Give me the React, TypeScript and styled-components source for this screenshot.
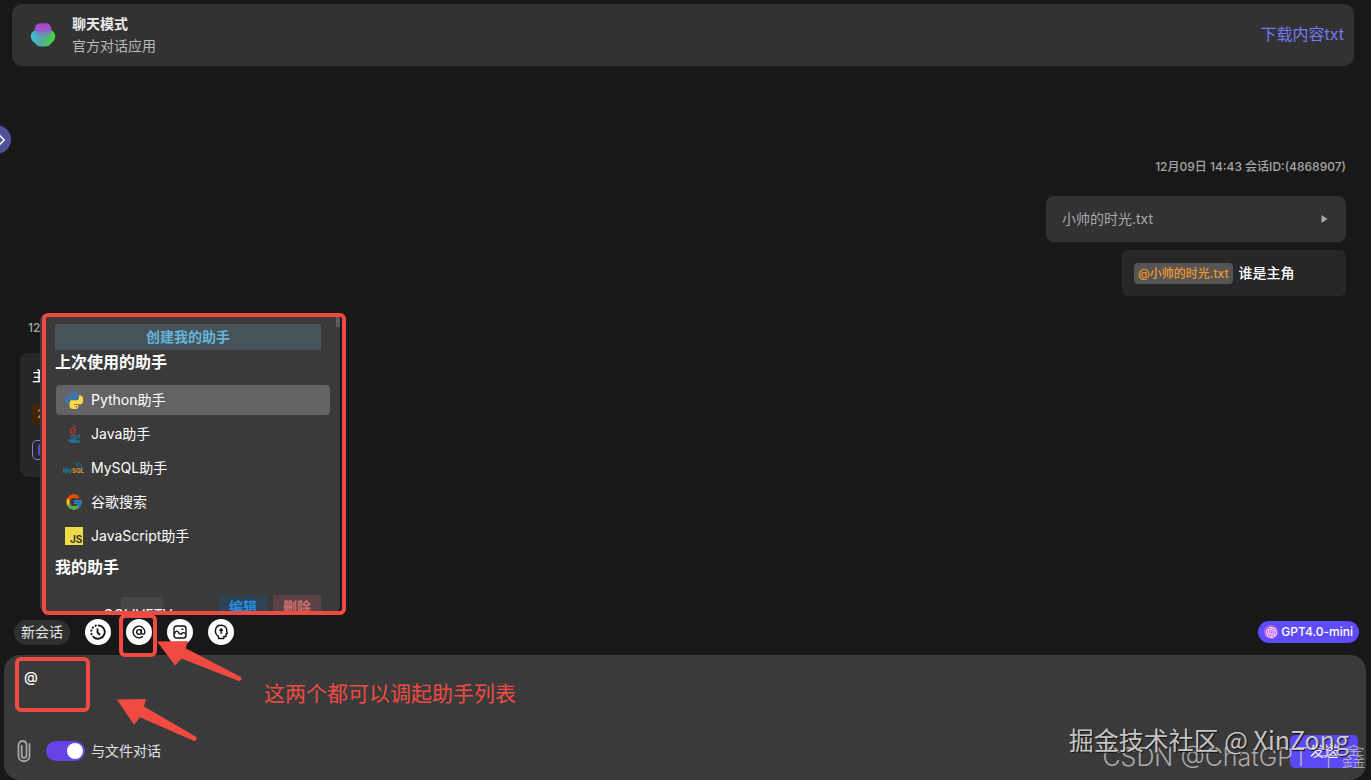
import React from 'react';
import styled, { createGlobalStyle, css } from 'styled-components';
import { FcGoogle } from 'react-icons/fc';
import { SiOpenai } from 'react-icons/si';
import { AtSign, ChevronRight } from 'lucide-react';

const RED = '#f04b42';

const GlobalStyle = createGlobalStyle`
  *, *::before, *::after { box-sizing: border-box; }
  html, body { margin: 0; padding: 0; background: #181818; }
  body, button, input, textarea {
    font-family: Inter, 'Noto Sans CJK SC', sans-serif;
    font-size: 14px;
    line-height: 20px;
  }
  button { border: 0; padding: 0; background: none; color: inherit; cursor: pointer; }
  h1, h2, p, ul { margin: 0; padding: 0; }
  ul { list-style: none; }
`;

const Page = styled.div`
  position: relative;
  display: flex;
  flex-direction: column;
  min-height: 100vh;
  padding-top: 4px;
  overflow: hidden;
  color: #fff;
`;

const Header = styled.header`
  display: flex;
  align-items: center;
  gap: 16px;
  height: 62px;
  margin: 0 17px 0 12px;
  padding: 0 10px 0 18px;
  border-radius: 10px;
  background: #323232;
`;

const HeaderText = styled.div`
  flex: 1;
`;

const Title = styled.h1`
  font-size: 14px;
  line-height: 22px;
  font-weight: 600;
  color: #ececec;
`;

const Subtitle = styled.p`
  line-height: 22px;
  color: #b8b8b8;
`;

const DownloadLink = styled.a`
  padding-bottom: 2px;
  font-size: 16px;
  line-height: 24px;
  color: #7478f2;
  text-decoration: none;
`;

const DrawerHandle = styled.button`
  position: absolute;
  left: -18px;
  top: 125px;
  display: flex;
  align-items: center;
  justify-content: flex-end;
  width: 29px;
  height: 29px;
  border-radius: 50%;
  background: #51519a;
`;

const Chat = styled.main`
  flex: 1;
  display: flex;
  flex-direction: column;
  gap: 22px;
  padding: 91px 25px 0 20px;
`;

const Message = styled.section<{ $mine?: boolean }>`
  display: flex;
  flex-direction: column;
  align-items: ${p => (p.$mine ? 'flex-end' : 'flex-start')};
`;

const Stamp = styled.time<{ $inset?: boolean }>`
  font-size: 12px;
  font-weight: 500;
  line-height: 20px;
  color: #a6a6a6;
  padding-left: ${p => (p.$inset ? 8 : 0)}px;
`;

const FileCard = styled.button`
  display: flex;
  align-items: center;
  justify-content: space-between;
  width: 300px;
  height: 46px;
  margin: 19px 0 8px;
  padding: 0 18px 0 16px;
  border-radius: 8px;
  background: #323232;
  color: #a9a9a9;
`;

const Bubble = styled.div`
  display: flex;
  align-items: center;
  gap: 6px;
  width: 224px;
  height: 46px;
  padding: 0 12px;
  border-radius: 6px;
  background: #272727;
  font-weight: 500;
`;

const FileTag = styled.span`
  padding: 0 4px;
  border-radius: 4px;
  background: #575553;
  color: #f0962e;
  font-size: 12px;
  line-height: 21px;
`;

const Reply = styled.div`
  display: flex;
  flex-direction: column;
  align-items: flex-start;
  gap: 16px;
  width: 300px;
  height: 124px;
  margin-top: 15px;
  padding: 13px 12px;
  border-radius: 8px;
  background: #272727;
  font-weight: 500;
`;

const CostTag = styled.span`
  margin-top: 2px;
  padding: 0 5px;
  background: #3f2509;
  color: #c88a3c;
  font-size: 12px;
  line-height: 20px;
`;

const OutlineTag = styled.span`
  display: flex;
  align-items: center;
  width: 28px;
  height: 20px;
  padding-left: 5px;
  border: 1px solid #8a78e8;
  border-radius: 5px;
  &::before {
    content: '';
    width: 16px;
    height: 12px;
    border-radius: 3px;
    background: #5e49d8;
  }
`;

const Dock = styled.footer`
  position: relative;
`;

const ToolBar = styled.nav`
  display: flex;
  align-items: center;
  gap: 15px;
  padding: 0 12px 10px 14px;
`;

const NewChat = styled.button`
  height: 25px;
  padding: 0 7px;
  border-radius: 13px;
  background: #303030;
  color: #e4e4e4;
`;

const RoundButton = styled.button`
  position: relative;
  display: flex;
  align-items: center;
  justify-content: center;
  width: 26px;
  height: 26px;
  border-radius: 50%;
  background: #fff;
  color: #111;
`;

const ModelBadge = styled.button`
  display: flex;
  align-items: center;
  gap: 3px;
  height: 22px;
  margin-left: auto;
  padding: 0 6px;
  border-radius: 11px;
  background: #5f4bf7;
  color: #fff;
  font-size: 12px;
  font-weight: 500;
`;

const ModelIcon = styled.span`
  display: flex;
  align-items: center;
  justify-content: center;
  width: 14px;
  height: 14px;
  border-radius: 50%;
  background: #c062e4;
`;

const Composer = styled.form`
  position: relative;
  display: flex;
  flex-direction: column;
  height: 125px;
  margin: 0 5px 0 4px;
  padding: 12px 8px 12px 12px;
  border-radius: 16px;
  background: #3a3a3b;
`;

const Prompt = styled.textarea`
  flex: 1;
  width: 100%;
  min-height: 0;
  padding: 0 8px;
  border: 0;
  outline: 0;
  resize: none;
  background: transparent;
  color: #fff;
  font-weight: 500;
`;

const ComposerRow = styled.div`
  display: flex;
  align-items: center;
  gap: 14px;
  height: 34px;
`;

const IconButton = styled.button`
  display: flex;
  color: #a5a5a5;
`;

const SwitchLabel = styled.label`
  display: flex;
  align-items: center;
  gap: 6px;
  color: #e2e2e2;
`;

const Switch = styled.input`
  appearance: none;
  display: flex;
  align-items: center;
  justify-content: flex-end;
  width: 39px;
  height: 20px;
  margin: 0;
  padding: 0 2px;
  border-radius: 10px;
  background: #6543e6;
  &::before {
    content: '';
    width: 16px;
    height: 16px;
    border-radius: 50%;
    background: #fff;
  }
`;

const SendButton = styled.button`
  width: 68px;
  height: 33px;
  margin-left: auto;
  border-radius: 5px;
  background: #5b49f6;
  color: #fff;
`;

const Picker = styled.aside`
  position: absolute;
  left: 40px;
  bottom: calc(100% + 7px);
  width: 300px;
  height: 298px;
  padding: 10px 10px 0 15px;
  overflow: hidden;
  border-radius: 6px;
  background: #3a3a3b;
`;

const PickerScroll = styled.span`
  position: absolute;
  right: 0;
  top: 0;
  width: 4px;
  height: 13px;
  background: #5a5a5b;
`;

const CreateButton = styled.button`
  display: block;
  width: 266px;
  height: 26px;
  border-radius: 2px;
  background: #475359;
  color: #65b5da;
  font-weight: 600;
`;

const GroupTitle = styled.h2`
  font-size: 16px;
  line-height: 24px;
  font-weight: 600;
`;

const AssistantList = styled.ul`
  display: flex;
  flex-direction: column;
  gap: 4px;
  margin: 11px 0 4px 1px;
`;

const Assistant = styled.li<{ $active?: boolean }>`
  border-radius: 4px;
  ${p => p.$active && css`background: #636365;`}
`;

const AssistantButton = styled.button`
  display: flex;
  align-items: center;
  gap: 8px;
  width: 100%;
  height: 30px;
  padding: 0 9px;
`;

const MineRow = styled.div`
  display: flex;
  align-items: flex-start;
  gap: 6px;
  margin-top: 16px;
  padding-right: 9px;
`;

const MineName = styled.span`
  flex: 1;
  padding: 10px 0 0 48px;
  background: linear-gradient(#464647, #464647) 66px 2px / 42px 14px no-repeat;
`;

const RowAction = styled.button<{ $danger?: boolean }>`
  width: 48px;
  height: 24px;
  border-radius: 2px;
  background: ${p => (p.$danger ? '#5a4244' : '#2e4356')};
  color: ${p => (p.$danger ? '#cf6f6f' : '#2590e6')};
  font-weight: 600;
`;

const Frame = styled.span<{ $l: number; $t: number; $w: number; $h: number }>`
  position: absolute;
  z-index: 2;
  left: ${p => p.$l}px;
  top: ${p => p.$t}px;
  width: ${p => p.$w}px;
  height: ${p => p.$h}px;
  border: 4px solid ${RED};
  border-radius: 6px;
  pointer-events: none;
`;

const Arrow = styled.svg<{ $l: number; $t: number }>`
  position: absolute;
  z-index: 3;
  left: ${p => p.$l}px;
  top: ${p => p.$t}px;
  pointer-events: none;
`;

const Note = styled.p`
  position: absolute;
  left: 260px;
  top: 25px;
  color: ${RED};
  font-size: 21px;
  line-height: 28px;
`;

const Watermark = styled.span<{ $front?: boolean }>`
  position: absolute;
  z-index: 4;
  right: ${p => (p.$front ? 22 : 5)}px;
  bottom: ${p => (p.$front ? 25 : 7)}px;
  color: ${p => (p.$front ? 'rgba(220,220,220,.9)' : 'rgba(190,190,190,.85)')};
  font-size: 25px;
  font-weight: ${p => (p.$front ? 400 : 300)};
  font-family: ${p => (p.$front ? "'Noto Sans CJK SC'" : "Inter, 'Noto Sans CJK SC'")}, sans-serif;
  line-height: 32px;
  white-space: nowrap;
  pointer-events: none;
  text-shadow: ${p => (p.$front ? '1px 1px 1px #111' : 'none')};
`;

const Logo = () => (
  <svg width="26" height="26" viewBox="0 0 26 26" aria-hidden="true">
    <defs>
      <linearGradient id="lgBase" x1="0" y1="0.3" x2="1" y2="0.5">
        <stop offset="0" stopColor="#37bfe0" />
        <stop offset="0.5" stopColor="#55a8a4" />
        <stop offset="1" stopColor="#3ee02e" />
      </linearGradient>
      <linearGradient id="lgTop" x1="0" y1="0" x2="0" y2="1">
        <stop offset="0" stopColor="#b53fd0" />
        <stop offset="0.45" stopColor="#9a58cc" />
        <stop offset="1" stopColor="#5d9aa8" stopOpacity="0" />
      </linearGradient>
    </defs>
    <path d="M5 8C2 10 .5 12 .8 14.500C1 18 3 20 5.500 21.500C7 24 9 24.500 13 24.500S19 24.300 21 21.500C23.500 20 25.300 17 25.300 13.500C25 11 23 9 21 8Z" fill="url(#lgBase)" />
    <path d="M5 9C4 5 6 1.500 10 1.200H16C20 1.500 22 5 21 9L19 17H7Z" fill="url(#lgTop)" />
  </svg>
);

const PythonIcon = () => (
  <svg width="18" height="18" viewBox="0 0 24 24" aria-hidden="true">
    <path fill="#3a76a8" d="M14.25.18l.9.2.73.26.59.3.45.32.34.34.25.34.16.33.1.3.04.26.02.2-.01.13V8.5l-.05.63-.13.55-.21.46-.26.38-.3.31-.33.25-.35.19-.35.14-.33.1-.3.07-.26.04-.21.02H8.770l-.69.05-.59.14-.5.22-.41.27-.33.32-.27.35-.2.36-.15.37-.1.35-.07.32-.04.27-.02.21v3.060H3.170l-.21-.03-.28-.07-.32-.12-.35-.18-.36-.26-.36-.36-.35-.46-.32-.59-.28-.73-.21-.88-.14-1.050-.05-1.230.06-1.220.16-1.040.24-.87.32-.71.36-.57.4-.44.42-.33.42-.24.4-.16.36-.1.32-.05.24-.01h.16l.06.01h8.160v-.83H6.180l-.01-2.750-.02-.37.05-.34.11-.31.17-.28.25-.26.31-.23.38-.2.44-.18.51-.15.58-.12.64-.1.71-.06.77-.04.84-.02 1.270.05zm-6.300 1.980l-.23.33-.08.41.08.41.23.34.33.22.41.09.41-.09.33-.22.23-.34.08-.41-.08-.41-.23-.33-.33-.22-.41-.09-.41.09z" />
    <path fill="#ffd94a" d="M21.040 6.110l.28.06.32.12.35.18.36.27.36.35.35.47.32.59.28.73.21.88.14 1.040.05 1.230-.06 1.230-.16 1.040-.24.86-.32.71-.36.57-.4.45-.42.33-.42.24-.4.16-.36.09-.32.05-.24.02-.16-.01h-8.220v.82h5.840l.01 2.760.02.36-.05.34-.11.31-.17.29-.25.25-.31.24-.38.2-.44.17-.51.15-.58.13-.64.09-.71.07-.77.04-.84.01-1.270-.04-1.070-.14-.9-.2-.73-.25-.59-.3-.45-.33-.34-.34-.25-.34-.16-.33-.1-.3-.04-.25-.02-.2.01-.13v-5.340l.05-.64.13-.54.21-.46.26-.38.3-.32.33-.24.35-.2.35-.14.33-.1.3-.06.26-.04.21-.02.13-.01h5.840l.69-.05.59-.14.5-.21.41-.28.33-.32.27-.35.2-.36.15-.36.1-.35.07-.32.04-.28.02-.21V6.070h2.090l.14.01zm-6.470 14.250l-.23.33-.08.41.08.41.23.33.33.23.41.08.41-.08.33-.23.23-.33.08-.41-.08-.41-.23-.33-.33-.23-.41-.08-.41.08z" />
  </svg>
);

const JavaIcon = () => (
  <svg width="18" height="18" viewBox="0 0 18 18" fill="none" aria-hidden="true">
    <path d="M10 .5C11 3-.2 5 9 10M11.500 3.500C8 5 9.500 6.500 9.700 8.500" stroke="#d3342f" strokeWidth="1.300" />
    <path d="M5 10C4 11.500 11 11.400 12.500 10.500M5.500 12.500C5.500 13.700 10.500 13.700 12 12.700M12.800 10.200C15.500 9.500 14.800 12.500 12.500 12.800M4.500 14.500C1 15.500 6 16.500 9.500 16.300C13 16.200 15 15.500 13 14.800M6 14.600C6.500 15.300 10 15.300 11.500 14.700M5 17.500C10 18 14 17.500 15.200 16.600" stroke="#2377a8" strokeWidth="1.100" />
  </svg>
);

const SqlText = styled.text`
  font: 700 6px Inter, sans-serif;
`;

const MySqlIcon = () => (
  <svg width="18" height="18" viewBox="0 0 18 18" fill="none" overflow="visible" aria-hidden="true">
    <path d="M11.500 4C14 3 16 6 16.500 8.500L18 10.500M12 4.500L12.500 7L13.500 8.500" stroke="#0f7fa2" strokeWidth="1" />
    <SqlText x="-2" y="14" fill="#15809f">My</SqlText>
    <SqlText x="7" y="14" fill="#e8931c">SQL</SqlText>
  </svg>
);

const JsText = styled.text`
  font: 700 10px Inter, sans-serif;
`;

const JsIcon = () => (
  <svg width="18" height="18" viewBox="0 0 18 18" aria-hidden="true">
    <rect width="18" height="18" fill="#efda4b" />
    <JsText x="5" y="16" fill="#333">JS</JsText>
  </svg>
);

const HistoryIcon = () => (
  <svg width="16" height="16" viewBox="0 0 16 16" fill="none" stroke="currentColor" strokeWidth="1.800" aria-hidden="true">
    <path d="M8 1.300A6.700 6.700 0 1 1 4 13.400" />
    <path d="M4 13.400A6.700 6.700 0 0 1 8 1.300" strokeDasharray="2 1.300" />
    <path d="M7.500 4.500V8.500L10 11" />
  </svg>
);

const PictureIcon = () => (
  <svg width="14" height="14" viewBox="0 0 14 14" fill="none" stroke="currentColor" strokeWidth="1.400" strokeLinecap="round" aria-hidden="true">
    <rect x="1" y="1" width="12" height="12" rx="2.500" />
    <path d="M1.500 8.500C3 5.500 4.500 5.500 5.500 7.500S8 9.500 9 8.200S11 7.500 12.500 8.500M9 4.300H10" />
  </svg>
);

const IdeaIcon = () => (
  <svg width="16" height="16" viewBox="0 0 16 16" fill="none" stroke="currentColor" strokeWidth="1.400" strokeLinejoin="round" aria-hidden="true">
    <path d="M5.500 14.500V12.300C1 10 1.200 1.300 8 1.300C12 1.300 14 4 13.700 7L14.300 9.500L13 10V12.500H10.800V14.500Z" />
    <path d="M8.200 4.200L10 6.200L8.700 7.500V9.500H7.700V7.500L6.300 6.200Z" fill="currentColor" strokeWidth="0.500" />
  </svg>
);

const ClipIcon = () => (
  <svg width="16" height="24" viewBox="0 0 16 24" fill="none" stroke="currentColor" strokeWidth="1.800" strokeLinecap="round" aria-hidden="true">
    <path d="M13.500 5V17C13.500 24 2.500 24 2.500 17V6.500C2.500 .5 10.500 .5 10.500 6.500V16.500C10.500 19.500 5.700 19.500 5.700 16.500V7" />
  </svg>
);

const ExpandIcon = () => (
  <svg width="7" height="10" viewBox="0 0 7 10" aria-hidden="true">
    <path d="M.5 1L6.500 5L.5 9Z" fill="currentColor" />
  </svg>
);

const arrowShape = 'M0 .5L29 0L27 7L79 35Q81 38 77 39L23 17L17 24Z';

const assistants = [
  { name: 'Python助手', icon: <PythonIcon />, active: true },
  { name: 'Java助手', icon: <JavaIcon /> },
  { name: 'MySQL助手', icon: <MySqlIcon /> },
  { name: '谷歌搜索', icon: <FcGoogle size={18} /> },
  { name: 'JavaScript助手', icon: <JsIcon /> },
];

export default function App() {
  return (
    <Page>
      <GlobalStyle />
      <Header>
        <Logo />
        <HeaderText>
          <Title>聊天模式</Title>
          <Subtitle>官方对话应用</Subtitle>
        </HeaderText>
        <DownloadLink href="#download">下载内容txt</DownloadLink>
      </Header>
      <DrawerHandle aria-label="展开侧栏">
        <ChevronRight size={18} />
      </DrawerHandle>

      <Chat>
        <Message $mine>
          <Stamp>12月09日 14:43 会话ID:(4868907)</Stamp>
          <FileCard>
            小帅的时光.txt
            <ExpandIcon />
          </FileCard>
          <Bubble>
            <FileTag>@小帅的时光.txt</FileTag>
            谁是主角
          </Bubble>
        </Message>
        <Message>
          <Stamp $inset>12月</Stamp>
          <Reply>
            <span>主</span>
            <CostTag>2</CostTag>
            <OutlineTag />
          </Reply>
        </Message>
      </Chat>

      <Dock>
        <Picker aria-label="助手列表">
          <CreateButton>创建我的助手</CreateButton>
          <GroupTitle>上次使用的助手</GroupTitle>
          <AssistantList>
            {assistants.map(a => (
              <Assistant key={a.name} $active={a.active}>
                <AssistantButton>
                  {a.icon}
                  {a.name}
                </AssistantButton>
              </Assistant>
            ))}
          </AssistantList>
          <GroupTitle>我的助手</GroupTitle>
          <MineRow>
            <MineName>GGLIVETV</MineName>
            <RowAction>编辑</RowAction>
            <RowAction $danger>删除</RowAction>
          </MineRow>
          <PickerScroll />
        </Picker>
        <Frame $l={42} $t={-306} $w={304} $h={302} />

        <ToolBar>
          <NewChat>新会话</NewChat>
          <RoundButton aria-label="历史"><HistoryIcon /></RoundButton>
          <RoundButton aria-label="助手">
            <AtSign size={14} strokeWidth={2.4} />
            <Frame $l={-7} $t={-5} $w={38} $h={43} />
          </RoundButton>
          <RoundButton aria-label="图片"><PictureIcon /></RoundButton>
          <RoundButton aria-label="灵感"><IdeaIcon /></RoundButton>
          <ModelBadge>
            <ModelIcon><SiOpenai size={11} /></ModelIcon>
            GPT4.0-mini
          </ModelBadge>
        </ToolBar>

        <Composer>
          <Prompt aria-label="消息" defaultValue="@" />
          <ComposerRow>
            <IconButton type="button" aria-label="附件"><ClipIcon /></IconButton>
            <SwitchLabel>
              <Switch type="checkbox" defaultChecked />
              与文件对话
            </SwitchLabel>
            <SendButton type="button">发送</SendButton>
          </ComposerRow>
          <Frame $l={11} $t={2} $w={75} $h={55} />
          <Note>这两个都可以调起助手列表</Note>
          <Arrow $l={153} $t={-14} width="86" height="40" viewBox="0 0 81 39" preserveAspectRatio="none">
            <path d={arrowShape} fill={RED} />
          </Arrow>
          <Arrow $l={113} $t={44} width="81" height="42" viewBox="0 0 81 39" preserveAspectRatio="none">
            <path d={arrowShape} fill={RED} />
          </Arrow>
        </Composer>
      </Dock>
      <Watermark>CSDN @ChatGPT 千鑫</Watermark>
      <Watermark $front>掘金技术社区 @ XinZong</Watermark>
    </Page>
  );
}
